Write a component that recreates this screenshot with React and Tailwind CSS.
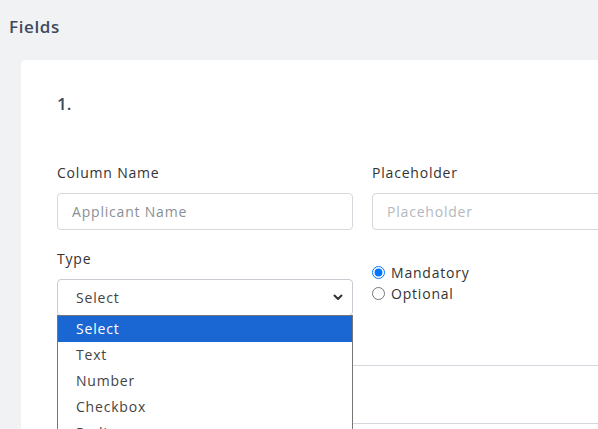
import { useState } from 'react';

const font = { fontFamily: '"Open Sans", "Liberation Sans", sans-serif' };

function Chevron() {
  return (
    <svg width="10" height="7" viewBox="0 0 10 7" fill="none">
      <path d="M1.5 1.5 L5 5 L8.5 1.5" stroke="#333" strokeWidth="2" strokeLinecap="round" strokeLinejoin="round" />
    </svg>
  );
}

export default function App() {
  const [required, setRequired] = useState('mandatory');
  const types = ['Select', 'Text', 'Number', 'Checkbox', 'Radio'];

  return (
    <div className="h-[429px] overflow-hidden bg-[#f1f2f4]" style={font}>
      <h2 className="pl-[9px] pt-[15px] text-[17px] leading-[24px] font-semibold tracking-[0.6px] text-[#3e4a5c]">Fields</h2>

      <div className="ml-[21px] mt-[21px] w-[660px] rounded bg-white px-[36px] pt-[32px] pb-10 shadow-[0_0_2px_rgba(0,0,0,0.04)]">
        <p className="text-[17px] leading-[24px] font-semibold text-[#3e4a5c]">1.</p>

        <div className="mt-[47px] grid grid-cols-[296px_296px] gap-x-[19px] tracking-[0.8px]">
          <div>
            <label className="block text-[14px] leading-[20px] text-[#333]">Column Name</label>
            <div className="mt-[10px] flex h-[37px] items-center rounded border border-[#d5d8dd] px-[14px] text-[14px] text-[#8a8f96]">
              Applicant Name
            </div>
          </div>
          <div>
            <label className="block text-[14px] leading-[20px] text-[#333]">Placeholder</label>
            <div className="mt-[10px] flex h-[37px] items-center rounded border border-[#d5d8dd] px-[14px] text-[14px] text-[#b4b8be]">
              Placeholder
            </div>
          </div>

          <div className="relative mt-[19px]">
            <label className="block text-[14px] leading-[20px] text-[#333]">Type</label>
            <div className="mt-[10px] flex h-[37px] items-center justify-between rounded border border-[#c8ccd2] pl-[18px] pr-[9px] text-[14px] text-[#444]">
              <span>Select</span>
              <Chevron />
            </div>
            <ul className="absolute left-0 top-[66px] z-10 w-[296px] border border-[#767676] bg-white text-[14px] text-[#444]">
              {types.map((t, i) => (
                <li key={t} className={`h-[26px] pl-[18px] leading-[26px] ${i === 0 ? 'bg-[#1a67d3] text-white' : ''}`}>
                  {t}
                </li>
              ))}
            </ul>
          </div>
          <div className="mt-[32px] text-[14px] leading-[21px] text-[#333]">
            <label className="flex items-center gap-[6px]">
              <input type="radio" name="req" checked={required === 'mandatory'} onChange={() => setRequired('mandatory')} className="m-0 h-[13px] w-[13px]" />
              Mandatory
            </label>
            <label className="flex items-center gap-[6px]">
              <input type="radio" name="req" checked={required === 'optional'} onChange={() => setRequired('optional')} className="m-0 h-[13px] w-[13px]" />
              Optional
            </label>
          </div>
        </div>

        <div className="mt-[49px] h-[58px] border-t border-[#d3d7de]" />
        <div className="border-t border-[#d3d7de] h-10" />
      </div>
    </div>
  );
}
